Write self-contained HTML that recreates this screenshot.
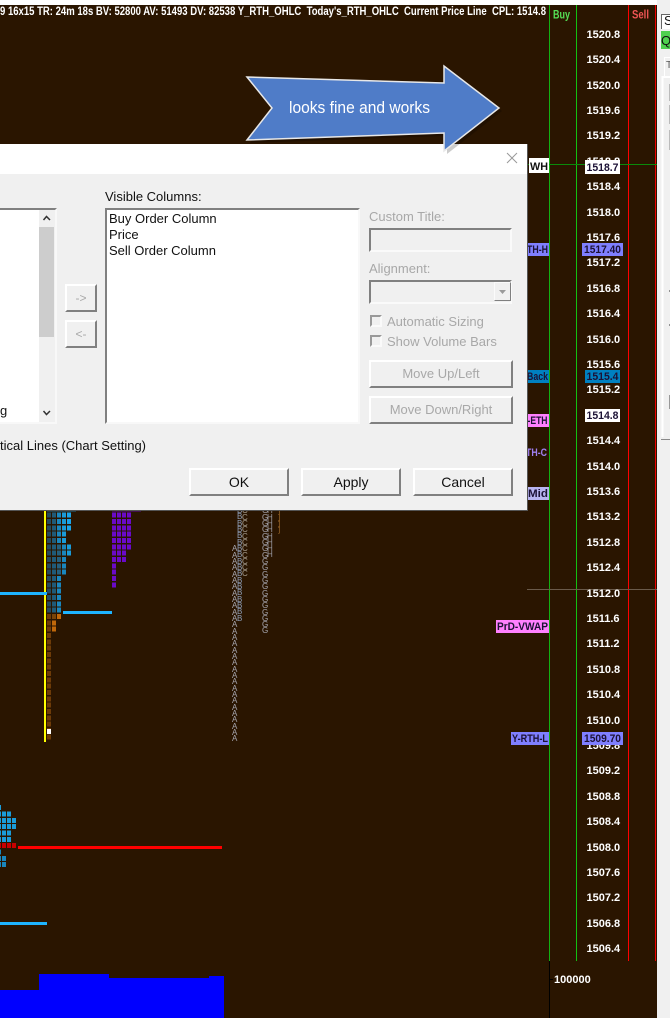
<!DOCTYPE html>
<html><head><meta charset="utf-8"><title>Chart</title>
<style>
html,body{margin:0;padding:0;background:#2a1500}
#p{position:relative;width:670px;height:1018px;overflow:hidden;background:#2a1500;font-family:"Liberation Sans",sans-serif}
svg{position:absolute;left:0;top:0}
.a{position:absolute;box-sizing:border-box;white-space:nowrap}
.t{font-size:13px;line-height:16px;color:#111}
.s{background:#f0f0f0;border:2px solid;border-color:#808080 #fafafa #fafafa #808080}
.b{background:#f0f0f0;border:2px solid;border-color:#fff #808080 #808080 #fff;text-align:center;font-size:14px;color:#111}
.c{background:#f0f0f0;border:2px solid;border-color:#999 #fafafa #fafafa #999}
.g{color:#a8a8a8}
.l{position:absolute;width:1px;white-space:normal;word-break:break-all;font-size:8px;line-height:6.33px}
</style></head><body><div id="p">
<svg width="670" height="1018" viewBox="0 0 670 1018" font-family="Liberation Sans, sans-serif">
<rect width="670" height="5" fill="#fff"/>
<rect x="657" width="13" height="1018" fill="#f0f0f0"/>
<g fill="none">
<path d="M549.5 5V961" stroke="#12b012"/><path d="M576.5 5V961" stroke="#12c012"/>
<path d="M628.5 5V961" stroke="#f00"/><path d="M655.5 5V961" stroke="#e00"/>
<path d="M527 164.5H657" stroke="#0a8a0a"/><path d="M527 589.5H657" stroke="#6a5a4a"/>
<path d="M549.5 961V1018" stroke="#000"/><path d="M549 979.5H553" stroke="#000"/>
</g>
<text x="0" y="15" font-size="12" font-weight="bold" fill="#fff" textLength="546" lengthAdjust="spacingAndGlyphs" xml:space="preserve">9 16x15 TR: 24m 18s BV: 52800 AV: 51493 DV: 82538 Y_RTH_OHLC  Today's_RTH_OHLC  Current Price Line  CPL: 1514.8</text>
<text x="553" y="18.500" font-size="11.500" fill="#55e055" font-weight="bold" textLength="17" lengthAdjust="spacingAndGlyphs">Buy</text>
<text x="632" y="18.500" font-size="11.500" fill="#f05555" font-weight="bold" textLength="17" lengthAdjust="spacingAndGlyphs">Sell</text>

<g font-size="11" font-weight="bold" fill="#fff">
<text x="586.5" y="38">1520.8</text><text x="586.5" y="63">1520.4</text><text x="586.5" y="89">1520.0</text><text x="586.5" y="114">1519.6</text><text x="586.5" y="139">1519.2</text><text x="586.5" y="165">1518.8</text>
<text x="586.5" y="190">1518.4</text><text x="586.5" y="216">1518.0</text><text x="586.5" y="241">1517.6</text><text x="586.5" y="266">1517.2</text><text x="586.5" y="292">1516.8</text><text x="586.5" y="317">1516.4</text><text x="586.5" y="343">1516.0</text><text x="586.5" y="368">1515.6</text><text x="586.5" y="393">1515.2</text>
<text x="586.5" y="444">1514.4</text><text x="586.5" y="470">1514.0</text><text x="586.5" y="495">1513.6</text><text x="586.5" y="520">1513.2</text><text x="586.5" y="546">1512.8</text><text x="586.5" y="571">1512.4</text><text x="586.5" y="597">1512.0</text><text x="586.5" y="622">1511.6</text><text x="586.5" y="647">1511.2</text><text x="586.5" y="673">1510.8</text><text x="586.5" y="698">1510.4</text><text x="586.5" y="724">1510.0</text><text x="586.5" y="749">1509.8</text><text x="586.5" y="774">1509.2</text><text x="586.5" y="800">1508.8</text><text x="586.5" y="825">1508.4</text><text x="586.5" y="851">1508.0</text><text x="586.5" y="876">1507.6</text><text x="586.5" y="901">1507.2</text><text x="586.5" y="927">1506.8</text><text x="586.5" y="952">1506.4</text>
<text x="554" y="983">100000</text>
</g>

<g font-size="11" font-weight="bold" fill="#1c1236">
<rect x="585" y="160" width="35" height="14" fill="#fff"/><text x="586.5" y="171" textLength="32" lengthAdjust="spacingAndGlyphs">1518.7</text>
<rect x="582" y="243" width="41" height="13" fill="#7f7fff"/><text x="584" y="253" textLength="37" lengthAdjust="spacingAndGlyphs">1517.40</text>
<rect x="585" y="370" width="35" height="13" fill="#0080c0"/><text x="586.5" y="380" textLength="32" lengthAdjust="spacingAndGlyphs">1515.4</text>
<rect x="585" y="409" width="35" height="13" fill="#fff"/><text x="586.5" y="419" textLength="32" lengthAdjust="spacingAndGlyphs">1514.8</text>
<rect x="582" y="732" width="41" height="13" fill="#7f7fff"/><text x="584" y="742" textLength="37" lengthAdjust="spacingAndGlyphs">1509.70</text>
<rect x="529" y="158" width="20" height="15" fill="#fff"/><text x="530" y="170" fill="#111" textLength="18" lengthAdjust="spacingAndGlyphs">WH</text>
<rect x="527" y="243" width="22" height="13" fill="#7f7fff"/><text x="527" y="253" textLength="21" lengthAdjust="spacingAndGlyphs">TH-H</text>
<rect x="527" y="370" width="22" height="13" fill="#0080c0"/><text x="527" y="380" textLength="21" lengthAdjust="spacingAndGlyphs">Back</text>
<rect x="527" y="414" width="22" height="13" fill="#ff80ff"/><text x="527.500" y="424" textLength="20" lengthAdjust="spacingAndGlyphs">-ETH</text>
<text x="526" y="456" fill="#a080f0" textLength="21" lengthAdjust="spacingAndGlyphs">TH-C</text>
<rect x="527" y="487" width="22" height="13" fill="#b8b4f0"/><text x="528" y="497" textLength="20" lengthAdjust="spacingAndGlyphs">Mid</text>
<rect x="496" y="620" width="53" height="13" fill="#ff80ff"/><text x="497" y="630" textLength="51" lengthAdjust="spacingAndGlyphs">PrD-VWAP</text>
<rect x="511" y="732" width="38" height="13" fill="#7f7fff"/><text x="512" y="742" textLength="36" lengthAdjust="spacingAndGlyphs">Y-RTH-L</text>
</g>

<!-- profile blocks -->
<g fill="none" stroke-width="4" stroke-dasharray="5 1.33" shape-rendering="crispEdges">
<path d="M49 512.7V614" stroke="#234a5e"/><path d="M49 614V740.7" stroke="#6e3c08"/>
<path d="M54 512.7V614" stroke="#1f5a78"/><path d="M54 614V620.3" stroke="#7a4408"/><path d="M54 620.3V633" stroke="#c0680a"/>
<path d="M59 512.7V544.4" stroke="#1a86bd"/><path d="M59 544.4V576" stroke="#245f7d"/><path d="M59 576V614" stroke="#1a86bd"/><path d="M59 614V620.3" stroke="#c0680a"/>
<path d="M64 512.7V544.4" stroke="#1a9bd8"/><path d="M64 544.4V576" stroke="#1a86bd"/>
<path d="M69 512.7V531.7" stroke="#1aa5ea"/><path d="M69 544.4V557" stroke="#1a9bd8"/>
<path d="M114 512.7V588.7" stroke="#6a0ac8"/><path d="M119 512.7V563.3" stroke="#6a0ac8"/><path d="M124 512.7V563.3" stroke="#6a0ac8"/><path d="M129 512.7V550.7" stroke="#6a0ac8"/>
<path d="M.5 805.2V843.2" stroke="#1a9bd8" stroke-width="1"/><path d="M.5 849.5V868" stroke="#1a86bd" stroke-width="1"/>
<path d="M4 811.5V843.2" stroke="#1a9bd8"/><path d="M4 855.8V868.5" stroke="#1a86bd"/>
<path d="M9 811.5V843.2" stroke="#1a9bd8"/><path d="M14 817.8V830.5" stroke="#1a9bd8"/>
</g>
<rect x="47" y="729" width="4" height="5" fill="#fff"/>
<path fill="#c80000" d="M0 843h1v5H0zM2 843h4v5H2zM7 843h4v5H7zM12 843h4v5h-4z"/>
<path fill="#1a86bd" d="M47 507h29v4.400H47z"/><path fill="#6a0ac8" d="M112 507h29v4.400h-29z"/>
<rect x="44" y="508" width="2" height="234" fill="#ff0"/>
<rect x="0" y="592" width="47" height="3" fill="#1eb4ff"/><rect x="63" y="611" width="49" height="3" fill="#1eb4ff"/>
<rect x="0" y="922" width="47" height="3" fill="#1eb4ff"/><rect x="18" y="846" width="204" height="3" fill="#f00"/>
<path fill="#00f" d="M0 990H39V974H109V978H209V976H224V1018H0z"/>

<!-- right panel -->
<rect x="661" y="14" width="9" height="15" fill="#fff"/><path d="M661.500 29V14.500H670" fill="none" stroke="#666"/>
<text x="664" y="25" font-size="13" fill="#111">S</text>
<rect x="661" y="31" width="9" height="18" fill="#4fd04f"/><text x="661" y="45" font-size="13" fill="#111">Q</text>
<path d="M664.500 76V57.500H670" fill="none" stroke="#fff"/><text x="666" y="68" font-size="10" fill="#555">T</text>
<path d="M662.500 437V77H670" fill="none" stroke="#fff" stroke-width="2"/>
<path d="M661 439.500H670" stroke="#8a8a8a"/>
<rect x="669" y="84" width="1" height="17" fill="#bbb"/><rect x="669" y="105" width="1" height="19" fill="#bbb"/><rect x="669" y="130" width="1" height="20" fill="#bbb"/><rect x="669" y="395" width="1" height="14" fill="#999"/>
<path d="M669 291H670M669 325H670" stroke="#333"/>
</svg>

<!-- TPO letters -->
<div class="l" style="left:232px;bottom:275.5px;color:#a8a8b0">AAAAAAAAAAAAAAAAAAAAAAAAAAAAAAA</div>
<div class="l" style="left:237px;bottom:396px;color:#8f9fb8">BBBBBBBBBBBBBBBBBB</div>
<div class="l" style="left:242px;bottom:440.2px;color:#a89f90">CCCCCCCCCCC</div>
<div class="l" style="left:262px;bottom:383.2px;color:#a8a8b0">GGGGGGGGGGGGGGGGGGGG</div>
<div class="l" style="left:267px;bottom:459.2px;color:#9a9aa2">HHHHHHHH</div>
<div class="l" style="left:278px;bottom:484.5px;color:#a06a2a">]<br>]<br>]<br>]</div>

<!-- dialog -->
<div class="a" style="left:0;top:144px;width:528px;height:367px;background:#f0f0f0;border-right:1px solid #555;border-bottom:1px solid #555"></div>
<div class="a" style="left:0;top:144px;width:527px;height:30px;background:#fff"></div>
<svg width="670" height="200" style="pointer-events:none"><path d="M507 153L517 163M517 153L507 163" stroke="#9a9a9a" fill="none"/></svg>

<div class="a t" style="left:105px;top:189px">Visible Columns:</div>
<div class="a" style="left:-3px;top:208px;width:60px;height:216px;background:#fff;border:2px solid;border-color:#808080 #f8f8f8 #f8f8f8 #808080"></div>
<div class="a" style="left:39px;top:210px;width:16px;height:212px;background:#f0f0f0"></div>
<div class="a" style="left:39px;top:227px;width:15px;height:110px;background:#cdcdcd"></div>
<svg width="670" height="430" style="pointer-events:none"><path d="M43.500 220L46.500 216.500L50 220M43.500 411L46.500 414.500L50 411" fill="none" stroke="#333" stroke-width="1.500"/></svg>
<div class="a t" style="left:0;top:403px">g</div>

<div class="a" style="left:105px;top:208px;width:255px;height:216px;background:#fff;border:2px solid;border-color:#808080 #f8f8f8 #f8f8f8 #808080"></div>
<div class="a t" style="left:109px;top:211px">Buy Order Column</div>
<div class="a t" style="left:109px;top:227px">Price</div>
<div class="a t" style="left:109px;top:243px">Sell Order Column</div>

<div class="a b g" style="left:65px;top:284px;width:32px;height:28px;line-height:24px;font-size:12px">-&gt;</div>
<div class="a b g" style="left:65px;top:320px;width:32px;height:28px;line-height:24px;font-size:12px">&lt;-</div>

<div class="a t g" style="left:369px;top:209px">Custom Title:</div>
<div class="a s" style="left:369px;top:228px;width:143px;height:24px"></div>
<div class="a t g" style="left:369px;top:261px">Alignment:</div>
<div class="a s" style="left:369px;top:280px;width:143px;height:24px"></div>
<div class="a" style="left:494px;top:282px;width:17px;height:19px;background:#f0f0f0;border:1px solid;border-color:#fbfbfb #808080 #808080 #fbfbfb"></div>
<svg width="670" height="310" style="pointer-events:none"><path d="M499 290H506L502.500 294z" fill="#9a9a9a"/></svg>
<div class="a c" style="left:370px;top:315px;width:12px;height:12px"></div>
<div class="a t g" style="left:387px;top:314px">Automatic Sizing</div>
<div class="a c" style="left:370px;top:335px;width:12px;height:12px"></div>
<div class="a t g" style="left:387px;top:334px">Show Volume Bars</div>
<div class="a b g" style="left:369px;top:360px;width:144px;height:28px;line-height:24px;font-size:13px">Move Up/Left</div>
<div class="a b g" style="left:369px;top:396px;width:144px;height:28px;line-height:24px;font-size:13px">Move Down/Right</div>
<div class="a t" style="left:0;top:438px;width:146px;overflow:hidden;direction:rtl"><span style="direction:ltr;unicode-bidi:bidi-override">tical Lines (Chart Setting)</span></div>
<div class="a b" style="left:189px;top:468px;width:100px;height:28px;line-height:24px">OK</div>
<div class="a b" style="left:301px;top:468px;width:100px;height:28px;line-height:24px">Apply</div>
<div class="a b" style="left:413px;top:468px;width:100px;height:28px;line-height:24px">Cancel</div>

<!-- arrow on top of dialog -->
<svg width="670" height="200" font-family="Liberation Sans, sans-serif">
<polygon points="250,80 447,86 447,69 502,111 447,154 447,136 250,143 275,111" fill="#000" opacity=".2"/>
<polygon points="247,77 444,83 444,66 499,108 444,151 444,133 247,140 272,108" fill="#4f7cc8" stroke="#e8e8e8" stroke-width="1.500"/>
<text x="289" y="113" font-size="17" fill="#fff" textLength="141" lengthAdjust="spacingAndGlyphs">looks fine and works</text>
</svg>
</div></body></html>
